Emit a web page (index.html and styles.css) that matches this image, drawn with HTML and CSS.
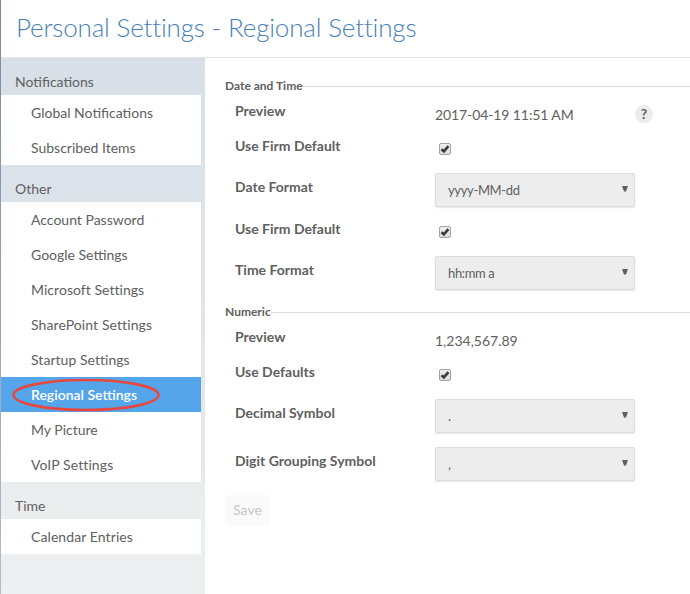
FILE: index.html
```html
<!DOCTYPE html>
<html lang="en">
<head>
<meta charset="utf-8">
<title>Personal Settings - Regional Settings</title>
<link rel="stylesheet" href="styles.css">
</head>
<body>
<svg class="defs" width="0" height="0" aria-hidden="true">
  <defs>
    <linearGradient id="boxfill" x1="0" y1="0" x2="0" y2="1"><stop offset="0" stop-color="#eeeeee"/><stop offset="1" stop-color="#dcdcdc"/></linearGradient>
    <symbol id="check" viewBox="0 0 12 12">
      <rect x=".5" y=".5" width="11" height="11" rx="1.5" fill="url(#boxfill)" stroke="#a3a3a3"/>
      <path d="M2.5 6.2 L4.9 8.4 L9.4 3.1" fill="none" stroke="#3c3c3c" stroke-width="2.6"/>
    </symbol>
    <symbol id="arrow" viewBox="0 0 6 6"><path d="M0 0H6L4 5.5H2Z" fill="#606060"/></symbol>
  </defs>
</svg>
<div class="page">
  <header class="header"><h1 class="title">Personal Settings - Regional Settings</h1></header>
  <div class="body">
    <nav class="sidebar">
      <h2 class="group">Notifications</h2>
      <ul class="items">
        <li class="item">Global Notifications</li>
        <li class="item">Subscribed Items</li>
      </ul>
      <h2 class="group">Other</h2>
      <ul class="items">
        <li class="item">Account Password</li>
        <li class="item">Google Settings</li>
        <li class="item snug">Microsoft Settings</li>
        <li class="item wide">SharePoint Settings</li>
        <li class="item snug">Startup Settings</li>
        <li class="item active">Regional Settings<svg class="ring" width="150" height="36" viewBox="0 0 150 36"><ellipse cx="75" cy="18" rx="72.5" ry="15" fill="none" stroke="#e8473f" stroke-width="2.6"/></svg></li>
        <li class="item">My Picture</li>
        <li class="item wide">VoIP Settings</li>
      </ul>
      <h2 class="group">Time</h2>
      <ul class="items">
        <li class="item wide">Calendar Entries</li>
      </ul>
    </nav>
    <main class="content">
      <section class="section">
        <h3 class="legend">Date and Time</h3>
        <div class="row text-row"><span class="label">Preview</span><span class="value date">2017-04-19 11:51 AM</span><span class="help">?</span></div>
        <div class="row check-row"><span class="label">Use Firm Default</span><svg class="check"><use href="#check"/></svg></div>
        <div class="row select-row"><span class="label">Date Format</span><div class="select"><span class="option">yyyy-MM-dd</span><svg class="arrow"><use href="#arrow"/></svg></div></div>
        <div class="row check-row spaced"><span class="label">Use Firm Default</span><svg class="check"><use href="#check"/></svg></div>
        <div class="row select-row"><span class="label">Time Format</span><div class="select"><span class="option">hh:mm a</span><svg class="arrow"><use href="#arrow"/></svg></div></div>
      </section>
      <section class="section">
        <h3 class="legend">Numeric</h3>
        <div class="row text-row"><span class="label">Preview</span><span class="value">1,234,567.89</span></div>
        <div class="row check-row"><span class="label">Use Defaults</span><svg class="check"><use href="#check"/></svg></div>
        <div class="row select-row"><span class="label">Decimal Symbol</span><div class="select"><span class="option">.</span><svg class="arrow"><use href="#arrow"/></svg></div></div>
        <div class="row select-row"><span class="label">Digit Grouping Symbol</span><div class="select"><span class="option">,</span><svg class="arrow"><use href="#arrow"/></svg></div></div>
      </section>
      <button class="save" disabled>Save</button>
    </main>
  </div>
</div>
</body>
</html>
```
FILE: styles.css
```css
* { box-sizing: border-box; }
body { margin: 0; background: #fff; color: #606060; font-family: Lato, "Liberation Sans", sans-serif; font-size: 14px; overflow: hidden; }
.defs { display: block; height: 0; }
.page { display: flex; flex-direction: column; height: 594px; border-left: 1px solid; border-image: linear-gradient(#7489aa, #b4bcc9) 1; }
.header { height: 58px; border-bottom: 1px solid #e2e4e7; padding-left: 15px; }
.title { margin: 0; font-size: 26px; line-height: 54px; font-weight: 300; letter-spacing: -.17px; color: #4a7fb8; white-space: nowrap; }
.body { flex: 1; display: flex; min-height: 0; }
.sidebar { width: 204px; padding-right: 4px; background: linear-gradient(#d8dfe7, #e6eaee 424px, #ebecee 425px, #eeeff0); }
.group { margin: 0; height: 37px; padding: 14px 0 0 14px; font-size: 14px; line-height: 20px; font-weight: 400; }
.items { margin: 0; padding: 0; list-style: none; background: #fff; }
.item { position: relative; height: 35px; padding-left: 30px; line-height: 35px; white-space: nowrap; }
.wide { letter-spacing: .09px; }
.snug { letter-spacing: .04px; }
.active { background: #55a5ea; color: #fff; font-weight: 600; }
.ring { position: absolute; left: 10px; top: 0; }
.content { flex: 1; padding-left: 20px; }
.section { height: 226px; padding-top: 18px; }
.legend { display: flex; align-items: center; margin: 0 0 2px; height: 20px; font-size: 12px; line-height: 16px; font-weight: 700; white-space: nowrap; padding-bottom: 1px; }
.legend::after { content: ""; flex: 1; height: 1px; margin-top: 2px; background: #dadada; }
.row { display: flex; padding-left: 10px; }
.label { width: 200px; padding-top: 3px; line-height: 20px; font-weight: 700; white-space: nowrap; }
.value { width: 200px; padding-top: 7px; line-height: 20px; }
.date { letter-spacing: -.1px; }
.text-row { height: 35px; }
.check-row { height: 40px; }
.spaced { margin-top: -5px; }
.select-row { height: 48px; }
.select-row .label { padding-top: 4px; }
.check { width: 12px; height: 12px; margin: 10px 0 0 4px; }
.select { display: flex; justify-content: space-between; align-items: center; width: 200px; height: 34px; padding: 0 6px 0 12px; font-size: 13px; background: #ededed; border: 1px solid #dcdcdc; border-radius: 2px; box-shadow: 0 1px 2px rgba(0,0,0,.1); }
.option { letter-spacing: -.35px; line-height: 20px; }
.arrow { width: 6px; height: 6px; margin-top: -2px; }
.help { width: 18px; height: 18px; margin-top: 7px; border-radius: 50%; background: #ececec; text-align: center; line-height: 18px; font-weight: 700; }
.save { display: block; width: 45px; height: 30px; margin-top: -15px; padding: 0 0 2px; border: 0; border-radius: 2px; background: #fafafa; color: #c6c6c6; font: inherit; }
```
